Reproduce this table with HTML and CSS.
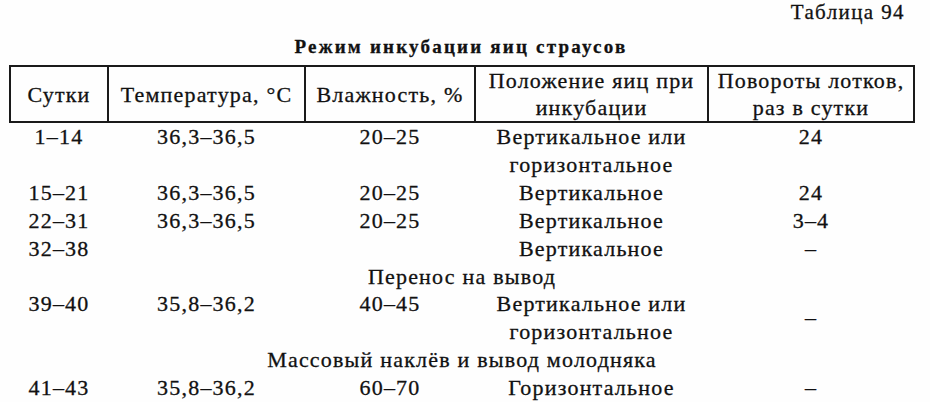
FILE: index.html
```html
<!DOCTYPE html>
<html lang="ru">
<head>
<meta charset="utf-8">
<title>Таблица 94</title>
<link rel="stylesheet" href="styles.css">
</head>
<body>
<div class="page">
  <div class="table-no">Таблица 94</div>
  <div class="table-title">Режим инкубации яиц страусов</div>
  <table class="grid">
    <colgroup>
      <col class="c1"><col class="c2"><col class="c3"><col class="c4"><col class="c5">
    </colgroup>
    <thead>
      <tr>
        <th>Сутки</th>
        <th>Температура, °C</th>
        <th>Влажность, %</th>
        <th>Положение яиц при<br>инкубации</th>
        <th>Повороты лотков,<br>раз в сутки</th>
      </tr>
    </thead>
    <tbody>
      <tr>
        <td>1–14</td><td>36,3–36,5</td><td>20–25</td><td>Вертикальное или<br>горизонтальное</td><td>24</td>
      </tr>
      <tr>
        <td>15–21</td><td>36,3–36,5</td><td>20–25</td><td>Вертикальное</td><td>24</td>
      </tr>
      <tr>
        <td>22–31</td><td>36,3–36,5</td><td>20–25</td><td>Вертикальное</td><td>3–4</td>
      </tr>
      <tr>
        <td>32–38</td><td></td><td></td><td>Вертикальное</td><td>–</td>
      </tr>
      <tr>
        <td colspan="5" class="span">Перенос на вывод</td>
      </tr>
      <tr>
        <td>39–40</td><td>35,8–36,2</td><td>40–45</td><td>Вертикальное или<br>горизонтальное</td><td class="mid">–</td>
      </tr>
      <tr>
        <td colspan="5" class="span">Массовый наклёв и вывод молодняка</td>
      </tr>
      <tr>
        <td>41–43</td><td>35,8–36,2</td><td>60–70</td><td>Горизонтальное</td><td>–</td>
      </tr>
    </tbody>
  </table>
</div>
</body>
</html>
```

FILE: styles.css
```css
html, body {
  margin: 0;
  padding: 0;
  background: #fefefe;
}

body {
  font-family: "Liberation Serif", "Times New Roman", serif;
  color: #111111;
  width: 930px;
  height: 402px;
  overflow: hidden;
  -webkit-text-stroke: 0.3px #111111;
}

.page {
  padding-left: 9px;
  width: 904px;
}

.table-no {
  text-align: right;
  font-size: 21px;
  line-height: 24px;
  letter-spacing: 1.4px;
  padding-right: 8px;
}

.table-title {
  text-align: center;
  font-weight: bold;
  font-size: 19px;
  line-height: 28px;
  letter-spacing: 2.2px;
  margin-top: 9px;
  margin-bottom: 4px;
}

.grid {
  width: 904px;
  table-layout: fixed;
  border-collapse: collapse;
  font-size: 22px;
  letter-spacing: 1.2px;
}

.c1 { width: 98px; }
.c2 { width: 197px; }
.c3 { width: 170px; }
.c4 { width: 233px; }
.c5 { width: 206px; }

.grid th {
  font-weight: normal;
  border: 2px solid #1a1a1a;
  padding: 0;
  line-height: 27px;
  text-align: center;
  vertical-align: middle;
  white-space: nowrap;
}

.grid td {
  padding: 0;
  line-height: 27.9px;
  text-align: center;
  vertical-align: top;
  white-space: nowrap;
}

.grid td.mid {
  vertical-align: middle;
}
```
